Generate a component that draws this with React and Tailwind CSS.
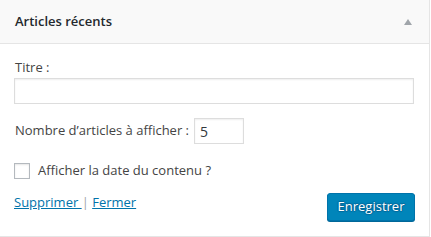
export default function App() {
  return (
    <div className="w-[430px] bg-white border-r border-b border-[#e5e5e5] text-[#444] font-['Open_Sans',sans-serif] text-[13px]">
      <div className="h-[44px] bg-[#f9f9f9] border-b border-[#e5e5e5] flex items-center justify-between pl-[15px] pr-[17px]">
        <h3 className="text-[13px] font-semibold text-[#23282d]">Articles récents</h3>
        <svg width="8" height="6" viewBox="0 0 8 6" className="mt-[1px]">
          <polygon points="4,0 8,6 0,6" fill="#a0a5aa" />
        </svg>
      </div>
      <div className="px-[14px] pt-[14px] pb-[15px]">
        <label className="block leading-[18px] pl-[1px]">Titre :</label>
        <input type="text" className="mt-[2px] block w-[400px] h-[26px] border border-[#ddd] shadow-[inset_0_1px_2px_rgba(0,0,0,0.07)] outline-none" />
        <div className="mt-[14px] flex items-center gap-[5px]">
          <label className="pl-[1px]">Nombre d’articles à afficher :</label>
          <input type="text" defaultValue="5" className="w-[50px] h-[26px] border border-[#ddd] px-[5px] text-[14px] text-[#32373c] shadow-[inset_0_1px_2px_rgba(0,0,0,0.07)] outline-none" />
        </div>
        <div className="mt-[17px] flex items-center gap-[8px]">
          <span className="w-[16px] h-[16px] border border-[#b4b9be] bg-white shadow-[inset_0_1px_2px_rgba(0,0,0,0.1)]" />
          <span>Afficher la date du contenu ?</span>
        </div>
        <div className="mt-[12px] flex items-center justify-between">
          <div className="mb-[8px]">
            <a href="#" className="text-[#0073aa] underline">Supprimer&nbsp;</a>
            <span className="text-[#a0a5aa]">| </span>
            <a href="#" className="text-[#0073aa] underline">Fermer</a>
          </div>
          <button className="h-[28px] w-[88px] bg-[#0085ba] border border-[#0073aa] rounded-[3px] text-white text-[13px] shadow-[0_1px_0_#006799] [text-shadow:0_-1px_1px_#006799,1px_0_1px_#006799,0_1px_1px_#006799,-1px_0_1px_#006799]">
            Enregistrer
          </button>
        </div>
      </div>
    </div>
  );
}
